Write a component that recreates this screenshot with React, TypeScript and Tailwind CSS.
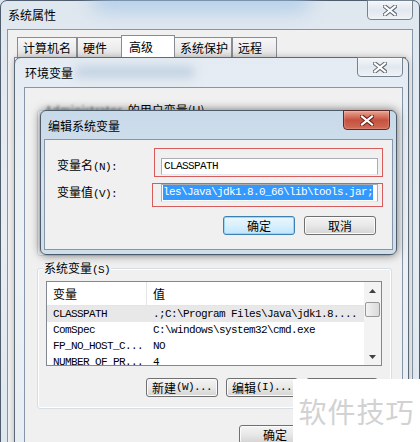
import type { ReactNode } from 'react';

const mono = "font-['Liberation_Mono','Noto_Sans_CJK_SC',monospace] text-[11px] tracking-[-0.6px]";

function CloseGlyph({ red = false }: { red?: boolean }) {
  return (
    <svg width="14" height="11" viewBox="0 0 14 11">
      <path d="M2 1.5 L12 9.5 M12 1.5 L2 9.5" stroke={red ? '#6b1f1a' : '#5d6670'} strokeWidth="4.2" strokeLinecap="square" />
      <path d="M2 1.5 L12 9.5 M12 1.5 L2 9.5" stroke="#ffffff" strokeWidth="2.2" strokeLinecap="square" />
    </svg>
  );
}

function CloseButton({ red = false, className }: { red?: boolean; className: string }) {
  return (
    <div
      className={`absolute flex items-center justify-center rounded-b-[4px] border ${
        red
          ? 'border-[#5e2a25] bg-gradient-to-b from-[#e8a493] via-[#c7503f] to-[#cf6c55] shadow-[inset_0_0_2px_rgba(255,255,255,0.6)]'
          : 'border-[#76838f] bg-gradient-to-b from-[#f4f7fa] via-[#e1e8ef] to-[#eef2f6] shadow-[inset_0_0_2px_#ffffff]'
      } ${className}`}
    >
      <CloseGlyph red={red} />
    </div>
  );
}

function Btn({ children, def = false, className = '' }: { children?: ReactNode; def?: boolean; className?: string }) {
  return (
    <div
      className={`flex h-[19px] w-[72px] shrink-0 items-center justify-center rounded-[3px] border ${
        def
          ? 'border-[#3c7fb1] bg-gradient-to-b from-[#eaf6fd] via-[#d9f0fc] to-[#bee6fd] shadow-[inset_0_0_0_1px_#9ed6f5]'
          : 'border-[#707070] bg-gradient-to-b from-[#f4f4f4] via-[#e8e8e8] to-[#d4d4d4] shadow-[inset_0_0_0_1px_#fbfbfb]'
      } text-[12px] leading-none ${className}`}
    >
      {children}
    </div>
  );
}

function Tab({ label, w, active = false }: { label: string; w: string; active?: boolean }) {
  return (
    <div
      className={`flex items-center border border-b-0 border-[#898c95] pl-[5px] ${w} ${
        active ? 'relative z-10 -mx-[1px] h-[22px] bg-white pl-[7px]' : 'h-[20px] bg-gradient-to-b from-[#f7f7f7] to-[#e3e3e3]'
      } text-[12px] leading-none`}
    >
      {label}
    </div>
  );
}

const rows = [
  ['CLASSPATH', '.;C:\\Program Files\\Java\\jdk1.8....'],
  ['ComSpec', 'C:\\windows\\system32\\cmd.exe'],
  ['FP_NO_HOST_C...', 'NO'],
  ['NUMBER_OF_PR...', '4'],
];

export default function App() {
  return (
    <div className="relative h-[442px] w-[420px] overflow-hidden bg-[#dbe5ef] font-['Noto_Sans_CJK_SC',sans-serif] text-[12px] text-black">
      {/* 系统属性 */}
      <div className="absolute left-0 top-0 h-[470px] w-[420px] rounded-t-[7px] border border-[#4e5c6c] bg-gradient-to-b from-[#dfe7ef] via-[#e8edf2] to-[#dde6ee]">
        <div className="absolute left-[90px] -top-[14px] h-[24px] w-[220px] rounded-full bg-[#9fc3e6] opacity-70 blur-[10px]" />
        <div className="absolute left-[7px] top-[7px] leading-[14px]">系统属性</div>
        <CloseButton className="left-[366px] -top-[1px] h-[20px] w-[46px]" />

        <div className="absolute left-[6px] top-[28px] h-[440px] w-[406px] border border-[#8496a8] bg-[#f0f0f0]">
          <div className="ml-[9px] mt-[5px] flex items-end">
            <Tab label="计算机名" w="w-[60px]" />
            <Tab label="硬件" w="w-[45px]" />
            <Tab label="高级" w="w-[54px]" active />
            <Tab label="系统保护" w="w-[58px]" />
            <Tab label="远程" w="w-[45px]" />
          </div>
          <div className="ml-[6px] h-[400px] w-[392px] border border-[#898c95] bg-white" />
        </div>
      </div>

      {/* 环境变量 */}
      <div className="absolute left-[14px] top-[57px] h-[400px] w-[395px] rounded-t-[7px] border border-[#5b6876] bg-gradient-to-b from-[#e4ebf2] via-[#edf1f5] to-[#e6edf3] shadow-[0_0_6px_rgba(0,0,0,0.25)]">
        <div className="absolute left-[60px] top-[8px] h-[12px] w-[120px] rounded-full bg-[#c3d3e3] blur-[5px]" />
        <div className="absolute left-[10px] top-[8px] leading-[14px]">环境变量</div>
        <CloseButton className="left-[342px] -top-[1px] h-[20px] w-[46px]" />

        <div className="absolute left-[9px] top-[29px] h-[400px] w-[379px] border border-[#8496a8] bg-[#f0f0f0]">
          <div className="ml-[20px] mt-[15px] flex h-[14px] items-center leading-none">
            <span className="mr-[6px] text-[#6a7480] blur-[0.8px]">Administrator</span>
            <span>的用户变量(U)</span>
          </div>
          <div className="ml-[12px] mt-[-7px] h-[146px] w-[355px] rounded-[3px] border border-[#d5dfe5] shadow-[inset_0_0_0_1px_#ffffff]" />

          {/* 系统变量 */}
          <div className="relative ml-[12px] mt-[12px] h-[141px] w-[355px] rounded-[3px] border border-[#d5dfe5] shadow-[inset_0_0_0_1px_#ffffff]">
            <div className="absolute -top-[8px] left-[5px] bg-[#f0f0f0] px-[1px] leading-[14px]">
              系统变量<span className={mono}>(S)</span>
            </div>
            <div className="ml-[8px] mt-[12px] flex h-[85px] w-[336px] border border-[#828790] bg-white">
              <div className="flex-1 overflow-hidden">
                <div className="flex h-[24px] items-center border-b border-[#e5e5e5]">
                  <div className="flex h-full w-[100px] items-center border-r border-[#e5e5e5] pl-[6px]">变量</div>
                  <div className="pl-[6px]">值</div>
                </div>
                {rows.map(([k, v], i) => (
                  <div key={k} className={`flex h-[16px] items-center whitespace-nowrap ${i === 0 ? 'bg-[#e8e8e8]' : ''} ${mono}`}>
                    <div className="w-[100px] pl-[6px]">{k}</div>
                    <div className="pl-[6px]">{v}</div>
                  </div>
                ))}
              </div>
              <div className="flex w-[17px] flex-col items-center bg-[#f3f3f3]">
                <div className="flex h-[17px] items-center justify-center">
                  <svg width="7" height="4" viewBox="0 0 7 4"><path d="M0 4 L3.5 0 L7 4 Z" fill="#404040" /></svg>
                </div>
                <div className="mt-[3px] h-[15px] w-[15px] rounded-[2px] border border-[#979797] bg-gradient-to-r from-[#f2f2f2] to-[#dadada]" />
                <div className="flex-1" />
                <div className="flex h-[17px] items-center justify-center">
                  <svg width="7" height="4" viewBox="0 0 7 4"><path d="M0 0 L3.5 4 L7 0 Z" fill="#404040" /></svg>
                </div>
              </div>
            </div>
            <div className="ml-[108px] mt-[12px] flex gap-[8px]">
              <Btn>新建<span className={mono}>(W)...</span></Btn>
              <Btn>编辑<span className={mono}>(I)...</span></Btn>
              <Btn />
            </div>
          </div>

          <div className="ml-[214px] mt-[16px] flex gap-[8px]">
            <Btn>确定</Btn>
            <Btn />
          </div>
        </div>
      </div>

      {/* 编辑系统变量 */}
      <div className="absolute left-[40px] top-[110px] h-[145px] w-[357px] rounded-[6px] border border-[#4d5b6b] bg-gradient-to-b from-[#c8d9e9] via-[#d6e3ef] to-[#cfdeeb] shadow-[0_0_10px_rgba(0,0,0,0.55)]">
        <div className="absolute left-[7px] top-[8px] leading-[14px]">编辑系统变量</div>
        <CloseButton red className="left-[302px] -top-[1px] h-[20px] w-[47px]" />

        <div className="absolute left-[3px] top-[28px] h-[111px] w-[349px] border border-[#8496a8] bg-[#f0f0f0] pl-[12px]">
          <div className="mt-[18px] flex h-[16px] items-center">
            <div className="w-[104px]">变量名<span className={mono}>(N):</span></div>
            <div className={`flex h-[17px] w-[217px] items-center border border-[#abadb3] border-b-[#e3e9ef] bg-white pl-[2px] ${mono}`}>CLASSPATH</div>
          </div>
          <div className="mt-[10px] flex h-[17px] items-center">
            <div className="w-[104px]">变量值<span className={mono}>(V):</span></div>
            <div className={`flex h-[18px] w-[217px] items-center overflow-hidden whitespace-nowrap border border-[#abadb3] border-b-[#e3e9ef] bg-white pl-[1px] ${mono}`}>
              <span className="bg-[#3399ff] leading-[15px] text-white">les\Java\jdk1.8.0_66\lib\tools.jar;</span>
            </div>
          </div>
          <div className="ml-[166px] mt-[15px] flex gap-[9px]">
            <Btn def>确定</Btn>
            <Btn>取消</Btn>
          </div>

          <div className="absolute left-[109px] top-[8px] h-[29px] w-[229px] border border-[#d95c5c]" />
          <div className="absolute left-[107px] top-[43px] h-[24px] w-[231px] border border-[#d95c5c]" />
        </div>
      </div>

      {/* watermark */}
      <div className="absolute left-[293px] top-[379px] flex h-[63px] w-[127px] items-center justify-center bg-white text-[28px] tracking-[1px] text-[#d2d2d2]">
        软件技巧
      </div>
    </div>
  );
}
